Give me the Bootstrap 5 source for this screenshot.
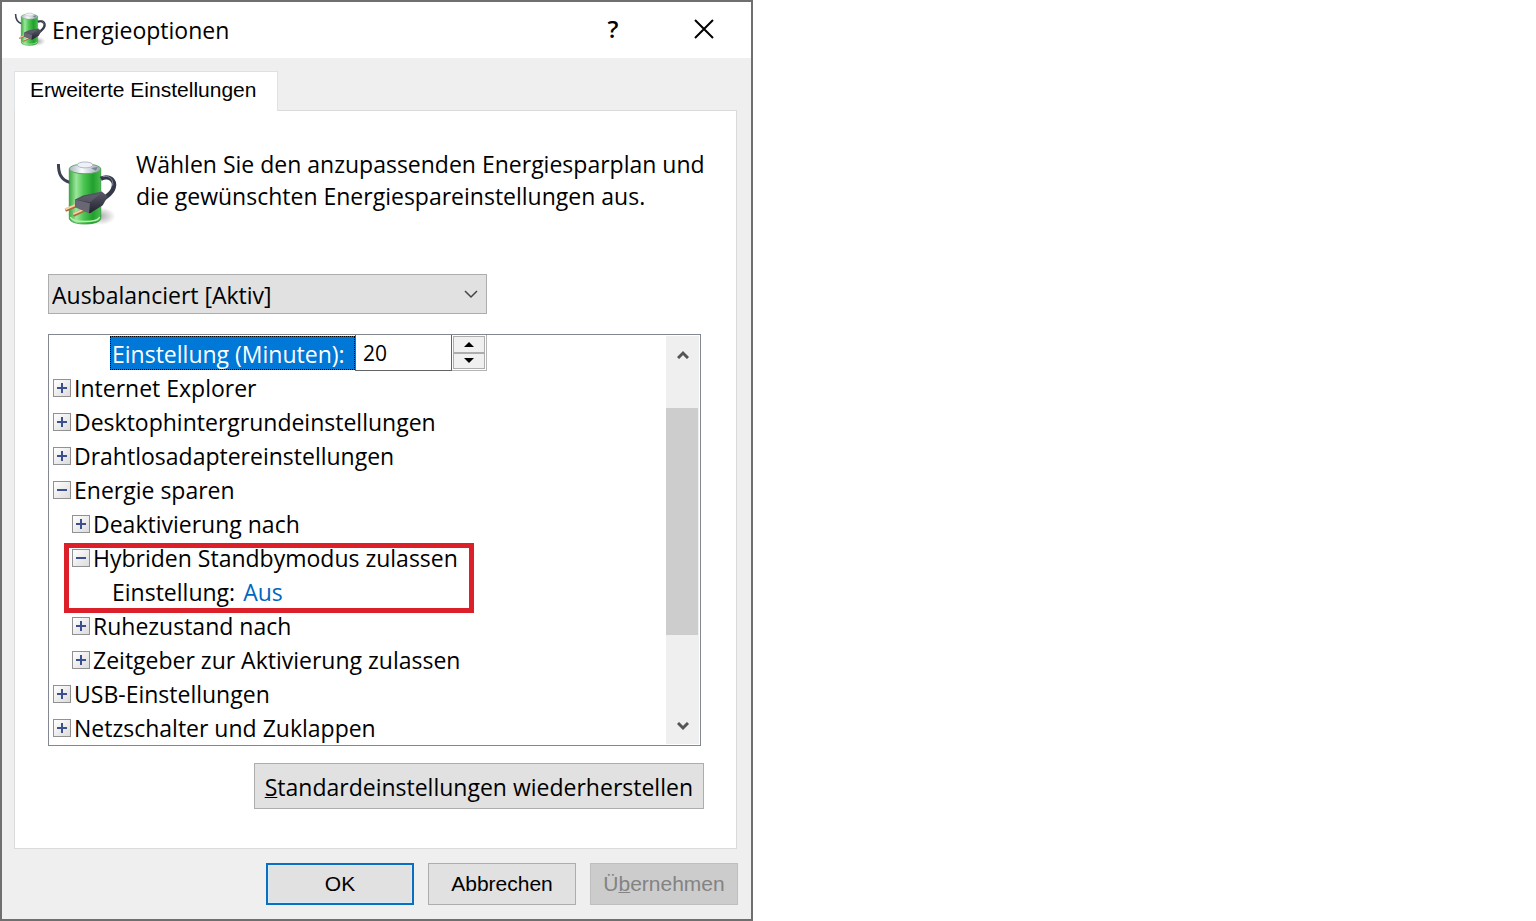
<!DOCTYPE html>
<html lang="de">
<head>
<meta charset="utf-8">
<meta name="viewport" content="width=device-width, initial-scale=1">
<title>Energieoptionen</title>
<link rel="stylesheet" href="https://cdn.jsdelivr.net/npm/bootstrap@5.3.0/dist/css/bootstrap.min.css">
<style>
  body { font-family: "Open Sans", "Noto Sans", sans-serif; font-size: 23px; line-height: 32px; color: #000; background: #fff; }
  .dialog { max-width: 753px; border: 2px solid #6f6f6f; background: #efefef; }
  .titlebar { height: 56px; background: #fff; padding: 0 27px 2px 12px; }
  .titlebar h1 { font-size: 23px; line-height: 32px; font-weight: 400; margin: 2px 0 0 5px; }
  .caption-btn { width: 40px; height: 40px; padding: 0; border: 0; background: none; font-size: 24px; font-weight: 600; color: #000; }
  .help-btn { margin-right: 51px; }
  .content { padding: 13px 14px 0 12px; }
  .arial { font-family: "Liberation Sans", sans-serif; font-size: 21px; line-height: 24px; }
  .sheet-tabs { border: 0; }
  .sheet-tabs .nav-link { height: 40px; min-width: 264px; border: 1px solid #dadada; border-bottom: 0; border-radius: 0; background: #fff; color: #000; padding: 6px 15px; margin: 0 0 -1px; position: relative; }
  .sheet { background: #fff; border: 1px solid #dadada; padding: 37px 20px 38px 33px; }
  .sheet-body { margin-right: 12px; }
  .intro { padding-left: 8px; gap: 18px; }
  .intro svg { margin-top: 12px; }
  .scheme { width: 67%; max-width: 439px; margin-top: 47px; }
  .scheme select { appearance: none; width: 100%; height: 40px; border: 1px solid #adadad; border-radius: 0; background: #e1e1e1; padding: 2px 36px 0 3px; color: #000; }
  .scheme svg { position: absolute; right: 9px; top: 16px; pointer-events: none; }
  .tree { margin: 20px 3px 0 0; border: 1px solid #828790; padding: 1px; }
  .tree ul { list-style: none; margin: 0; padding: 0; }
  .tree ul ul { padding-left: 19px; }
  .node { height: 34px; display: flex; align-items: center; padding-left: 3px; white-space: nowrap; }
  .node > span, .node > a { padding-top: 2px; }
  .node.leaf { padding-left: 24px; }
  .node a { color: #0066bf; text-decoration: none; margin-left: 8px; }
  .expander { width: 18px; height: 18px; padding: 0; margin: 2px 3px 0 0; border: 1px solid #919191; background: linear-gradient(135deg, #fff, #dcdcdc); display: flex; flex: none; }
  .node.first { padding-left: 60px; }
  .node > label.picked { min-width: 245px; background: #0078d7; color: #fff; outline: 1px dotted #000; outline-offset: -1px; height: 34px; padding: 2px 0 0 2px; }
  .minutes { width: 97px; height: 36px; border: 1px solid #646464; border-top: 0; padding: 0 7px; font-size: 21px; color: #000; }
  .spin { width: 35px; height: 36px; border: 1px solid #b4b4b4; border-left: 0; border-top: 0; padding: 1px; }
  .spin button { flex: 1; padding: 0; border: 1px solid #adadad; background: #f0f0f0; display: flex; align-items: center; justify-content: center; }
  .marked::after { content: ""; position: absolute; left: -5px; top: 3px; width: 410px; height: 70px; border: 5px solid #dc2029; pointer-events: none; }
  .scroller { width: 33px; background: #efefef; }
  .scroller button { height: 36px; border: 0; padding: 0; background: none; }
  .track { flex: 1; padding: 36px 1px 0 0; }
  .thumb { height: 227px; background: #cdcdcd; }
  .win-btn { border: 1px solid #adadad; border-radius: 0; background: #e1e1e1; color: #000; }
  .restore { height: 46px; margin-top: 17px; padding: 2px 10px 0; font-size: 23px; line-height: 32px; }
  .restore u, .footer-bar u { text-decoration-thickness: 1px; }
  .footer-bar { padding: 14px 13px 14px 12px; gap: 14px; }
  .footer-bar button { width: 148px; height: 42px; padding: 0; }
  .footer-bar .is-default { border: 2px solid #0a6fc0; box-shadow: inset 0 0 0 1px #d5ecfb; }
  .footer-bar button:disabled { background: #cccccc; border: 1px solid #bfbfbf; color: #838383; opacity: 1; }
</style>
</head>
<body>
<svg width="0" height="0" class="position-absolute" aria-hidden="true">
  <defs>
    <linearGradient id="cell"><stop offset="0" stop-color="#3aa843"/><stop offset=".22" stop-color="#9be79b"/><stop offset=".45" stop-color="#4fc653"/><stop offset=".75" stop-color="#1fa02d"/><stop offset="1" stop-color="#4dbb50"/></linearGradient>
    <linearGradient id="cap"><stop offset="0" stop-color="#aab4c0"/><stop offset=".4" stop-color="#fafcff"/><stop offset="1" stop-color="#9aa3b2"/></linearGradient>
    <linearGradient id="plug" x2="0" y2="1"><stop offset="0" stop-color="#5b5b6a"/><stop offset="1" stop-color="#20202e"/></linearGradient>
    <radialGradient id="shade"><stop offset="0" stop-color="#888" stop-opacity=".7"/><stop offset="1" stop-color="#888" stop-opacity="0"/></radialGradient>
    <symbol id="battery" viewBox="0 0 62 68">
      <ellipse cx="44" cy="57" rx="16" ry="9" fill="url(#shade)"/>
      <path d="M2 4C2 13 4 20 14 23" fill="none" stroke="#3c4152" stroke-width="3"/>
      <path d="M13 9V59C13 67 45 67 45 59V9Z" fill="url(#cell)" stroke="#258c31" stroke-width=".7"/>
      <path d="M14 58C17 64 41 64 44 58" fill="none" stroke="#b2f0a7" stroke-width="1.5"/>
      <ellipse cx="29" cy="9" rx="16" ry="5" fill="url(#cap)" stroke="#5aa862"/>
      <ellipse cx="29" cy="5" rx="8" ry="3" fill="#eef1f6" stroke="#b1b8c5"/>
      <path d="M35 8L42 7L40 11Z" fill="#7b8498"/>
      <path d="M45 19C54 15 60 21 58 28C56 35 51 36 46 41" fill="none" stroke="#343849" stroke-width="4.5"/>
      <path d="M47 17C54 15 58 20 57 26" fill="none" stroke="#858a9b" stroke-width="1"/>
      <path d="M9 51L23 45M17 56L30 50" stroke="#a8693c" stroke-width="3.5"/>
      <path d="M9 50L23 44M17 55L30 49" stroke="#f6d0a0" stroke-width="2"/>
      <path d="M19 40L27 36L46 32L52 37L47 46L34 54L19 47Z" fill="url(#plug)"/>
      <path d="M19 40L34 44L33 54L19 48Z" fill="#686773"/>
      <path d="M20 40L28 37L45 34L34 43Z" fill="#666575" opacity=".6"/>
    </symbol>
    <symbol id="plus" viewBox="0 0 16 16"><path d="M3 8H13M8 3V13" stroke="#3c5091" stroke-width="2"/></symbol>
    <symbol id="minus" viewBox="0 0 16 16"><path d="M3 8H13" stroke="#3c5091" stroke-width="2"/></symbol>
  </defs>
</svg>

<main class="dialog min-vh-100 d-flex flex-column">
  <header class="titlebar d-flex align-items-center">
    <svg width="33" height="35"><use href="#battery"/></svg>
    <h1 class="me-auto">Energieoptionen</h1>
    <button type="button" class="caption-btn help-btn" aria-label="Hilfe">?</button>
    <button type="button" class="caption-btn" aria-label="Schließen"><svg width="20" height="20" class="d-block m-auto"><path d="M1 1L19 19M19 1L1 19" stroke="#000" stroke-width="2"/></svg></button>
  </header>

  <div class="content flex-grow-1 d-flex flex-column">
    <ul class="nav nav-tabs sheet-tabs arial">
      <li class="nav-item"><a class="nav-link active" href="#sheet" aria-current="page">Erweiterte Einstellungen</a></li>
    </ul>
    <section class="sheet flex-grow-1" id="sheet">
      <div class="intro d-flex">
        <svg class="flex-shrink-0" width="62" height="67"><use href="#battery"/></svg>
        <p class="m-0">Wählen Sie den anzupassenden Energiesparplan und die gewünschten Energiespareinstellungen aus.</p>
      </div>

      <div class="sheet-body">
        <div class="scheme position-relative">
          <select aria-label="Energiesparplan"><option>Ausbalanciert [Aktiv]</option></select>
          <svg width="14" height="9"><path d="M1 1L7 7L13 1" fill="none" stroke="#444" stroke-width="1.5"/></svg>
        </div>

        <div class="tree d-flex">
          <ul class="flex-grow-1">
            <li class="node first">
              <label class="picked" for="minutes">Einstellung (Minuten):</label>
              <input class="minutes" id="minutes" type="text" value="20">
              <div class="spin d-flex flex-column">
                <button type="button" aria-label="Mehr"><svg width="10" height="5"><path d="M0 5L5 0L10 5Z"/></svg></button>
                <button type="button" aria-label="Weniger"><svg width="10" height="5"><path d="M0 0L5 5L10 0Z"/></svg></button>
              </div>
            </li>
            <li class="node"><button class="expander" type="button" aria-label="Erweitern"><svg width="16" height="16"><use href="#plus"/></svg></button><span>Internet Explorer</span></li>
            <li class="node"><button class="expander" type="button" aria-label="Erweitern"><svg width="16" height="16"><use href="#plus"/></svg></button><span>Desktophintergrundeinstellungen</span></li>
            <li class="node"><button class="expander" type="button" aria-label="Erweitern"><svg width="16" height="16"><use href="#plus"/></svg></button><span>Drahtlosadaptereinstellungen</span></li>
            <li>
              <div class="node"><button class="expander" type="button" aria-label="Reduzieren"><svg width="16" height="16"><use href="#minus"/></svg></button><span>Energie sparen</span></div>
              <ul>
                <li class="node"><button class="expander" type="button" aria-label="Erweitern"><svg width="16" height="16"><use href="#plus"/></svg></button><span>Deaktivierung nach</span></li>
                <li class="marked position-relative">
                  <div class="node"><button class="expander" type="button" aria-label="Reduzieren"><svg width="16" height="16"><use href="#minus"/></svg></button><span>Hybriden Standbymodus zulassen</span></div>
                  <ul><li class="node leaf"><span>Einstellung:</span><a href="#sheet">Aus</a></li></ul>
                </li>
                <li class="node"><button class="expander" type="button" aria-label="Erweitern"><svg width="16" height="16"><use href="#plus"/></svg></button><span>Ruhezustand nach</span></li>
                <li class="node"><button class="expander" type="button" aria-label="Erweitern"><svg width="16" height="16"><use href="#plus"/></svg></button><span>Zeitgeber zur Aktivierung zulassen</span></li>
              </ul>
            </li>
            <li class="node"><button class="expander" type="button" aria-label="Erweitern"><svg width="16" height="16"><use href="#plus"/></svg></button><span>USB-Einstellungen</span></li>
            <li class="node"><button class="expander" type="button" aria-label="Erweitern"><svg width="16" height="16"><use href="#plus"/></svg></button><span>Netzschalter und Zuklappen</span></li>
          </ul>
          <div class="scroller d-flex flex-column">
            <button type="button" aria-label="Nach oben"><svg class="d-block m-auto" width="12" height="9"><path d="M1 8L6 3L11 8" fill="none" stroke="#555" stroke-width="3"/></svg></button>
            <div class="track"><div class="thumb"></div></div>
            <button type="button" aria-label="Nach unten"><svg class="d-block m-auto" width="12" height="9"><path d="M1 1L6 6L11 1" fill="none" stroke="#555" stroke-width="3"/></svg></button>
          </div>
        </div>

        <div class="d-flex justify-content-end">
          <button type="button" class="btn win-btn restore"><u>S</u>tandardeinstellungen wiederherstellen</button>
        </div>
      </div>
    </section>
  </div>

  <footer class="footer-bar d-flex justify-content-end">
    <button type="button" class="btn win-btn arial is-default">OK</button>
    <button type="button" class="btn win-btn arial">Abbrechen</button>
    <button type="button" class="btn win-btn arial" disabled>Ü<u>b</u>ernehmen</button>
  </footer>
</main>
<script src="https://cdn.jsdelivr.net/npm/bootstrap@5.3.0/dist/js/bootstrap.bundle.min.js"></script>
</body>
</html>
